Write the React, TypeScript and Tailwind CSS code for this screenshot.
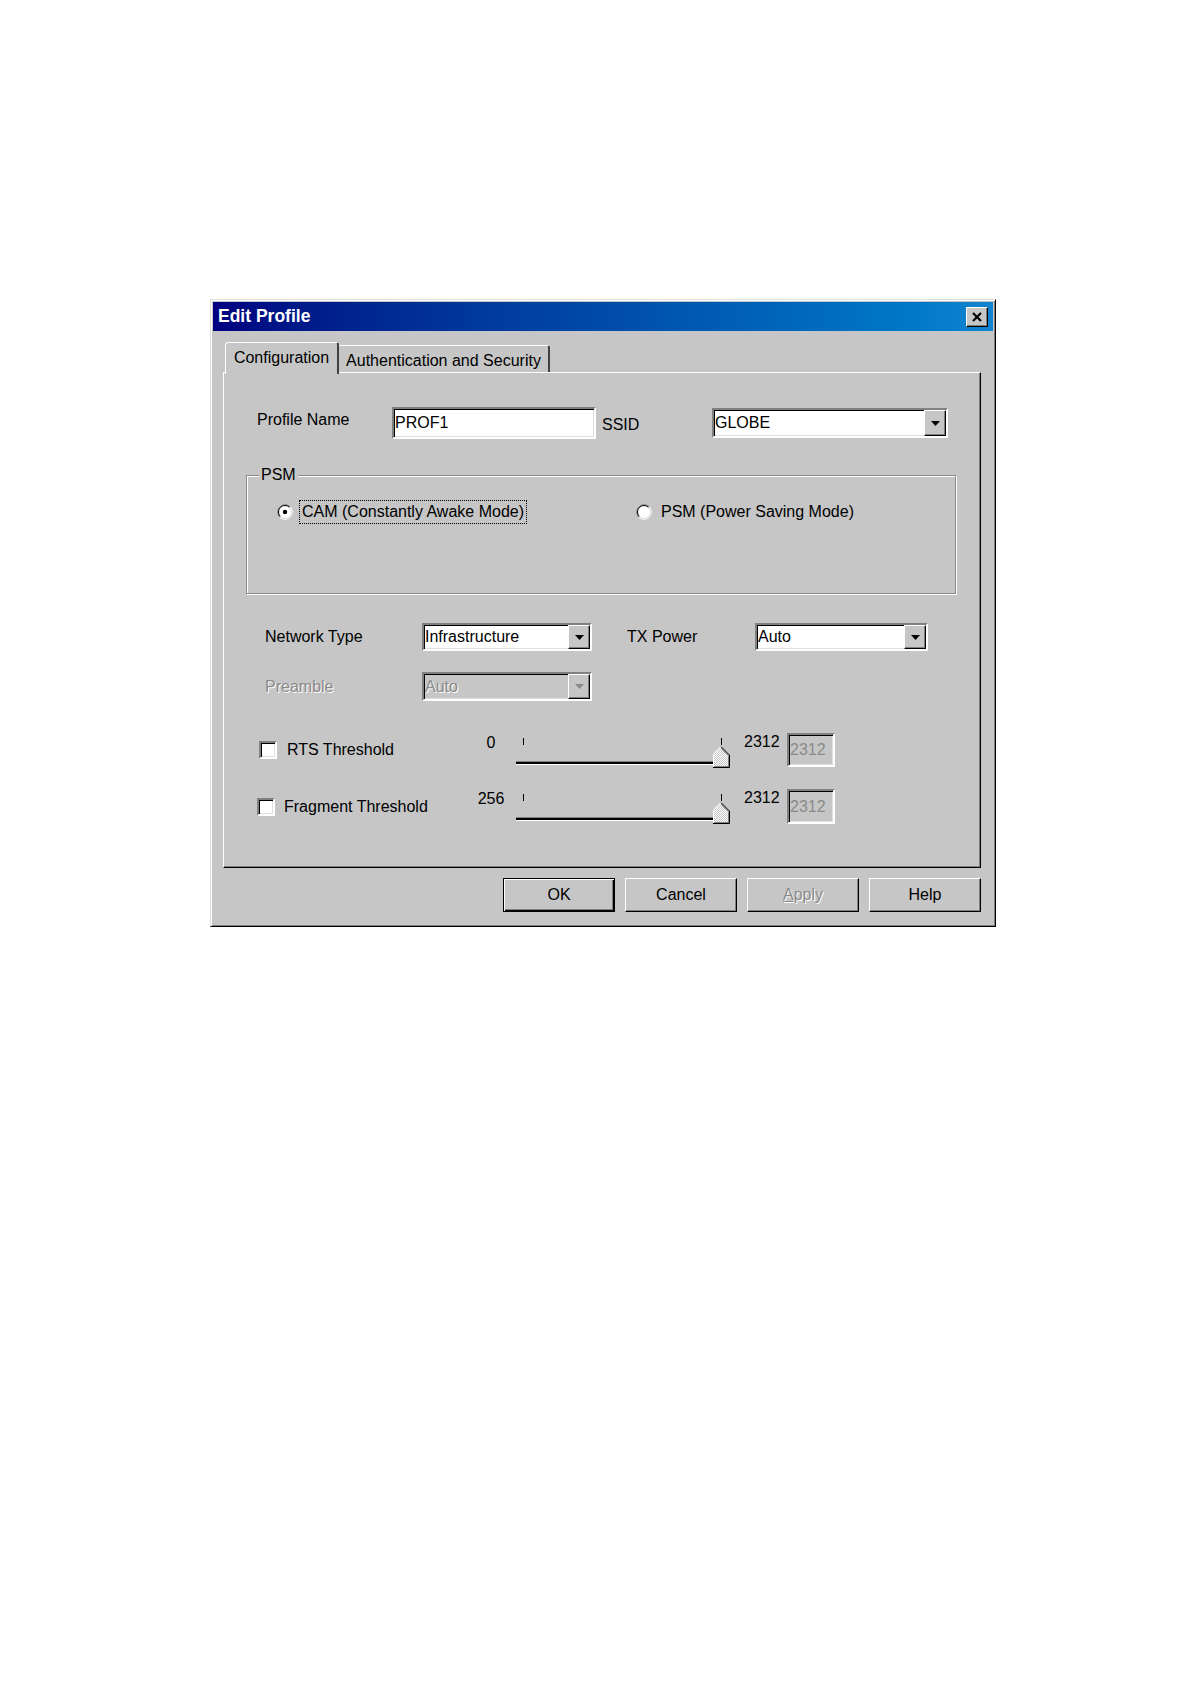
import React from "react";

// ── bevel helpers (Win9x look) ──
const SUNKEN =
  "border-2 border-t-[#808080] border-l-[#808080] border-r-white border-b-white shadow-[inset_1px_1px_0_#000,inset_-1px_-1px_0_#dfdfdf]";
const RAISED =
  "border border-t-white border-l-white border-r-black border-b-black shadow-[inset_-1px_-1px_0_#808080]";
const DISABLED_TEXT = "text-[#8a8a8a] [text-shadow:1px_1px_0_#fff]";

function Arrow({ disabled }: { disabled?: boolean }) {
  return (
    <div className={`w-[22px] h-full flex items-center justify-center bg-[#c6c6c6] ${RAISED}`}>
      <svg width="9" height="5" viewBox="0 0 9 5">
        <path d="M0 0h9L4.5 5z" fill={disabled ? "#8a8a8a" : "#000"} />
      </svg>
    </div>
  );
}

function Combo({
  value,
  width,
  height,
  disabled,
}: {
  value: string;
  width: string;
  height: string;
  disabled?: boolean;
}) {
  return (
    <div
      className={`${width} ${height} flex items-stretch ${SUNKEN} ${disabled ? "bg-[#c6c6c6]" : "bg-white"}`}
    >
      <span className={`flex-1 flex items-center pl-[1px] ${disabled ? DISABLED_TEXT : "text-black"}`}>
        {value}
      </span>
      <Arrow disabled={disabled} />
    </div>
  );
}

function Radio({ checked }: { checked?: boolean }) {
  return (
    <svg width="16" height="16" viewBox="0 0 16 16" className="shrink-0">
      <circle cx="8" cy="8" r="6.5" fill="#fff" />
      <path d="M2.7 13.3A7.5 7.5 0 0 1 13.3 2.7" stroke="#808080" strokeWidth="1" fill="none" />
      <path d="M13.3 2.7A7.5 7.5 0 0 1 2.7 13.3" stroke="#fff" strokeWidth="1" fill="none" />
      <path d="M3.4 12.6A6.5 6.5 0 0 1 12.6 3.4" stroke="#000" strokeWidth="1" fill="none" />
      <path d="M12.6 3.4A6.5 6.5 0 0 1 3.4 12.6" stroke="#dfdfdf" strokeWidth="1" fill="none" />
      {checked && <circle cx="8" cy="8" r="2.2" fill="#000" />}
    </svg>
  );
}

function Checkbox() {
  return <div className={`w-[18px] h-[18px] bg-white shrink-0 ${SUNKEN}`} />;
}

function Slider() {
  return (
    <svg width="216" height="35" viewBox="0 0 216 35" className="shrink-0">
      <defs>
        <pattern id="dither" width="2" height="2" patternUnits="userSpaceOnUse">
          <rect width="2" height="2" fill="#c6c6c6" />
          <rect width="1" height="1" fill="#fff" />
          <rect x="1" y="1" width="1" height="1" fill="#fff" />
        </pattern>
      </defs>
      {/* ticks */}
      <line x1="7.5" y1="5" x2="7.5" y2="12" stroke="#000" />
      <line x1="205.5" y1="5" x2="205.5" y2="12" stroke="#000" />
      {/* channel */}
      <rect x="0" y="28" width="205" height="1" fill="#808080" />
      <rect x="0" y="29" width="205" height="2" fill="#000" />
      <rect x="0" y="31" width="205" height="1" fill="#fff" />
      {/* thumb */}
      <polygon points="197,21 205,13 213,21 213,34 197,34" fill="url(#dither)" />
      <polyline points="197.5,34 197.5,21 205,13.5" fill="none" stroke="#fff" />
      <polyline points="205,13.5 213.5,22 213.5,34.5 197,34.5" fill="none" stroke="#000" />
      <polyline points="205,15 212.5,22.5 212.5,33.5 198,33.5" fill="none" stroke="#808080" />
    </svg>
  );
}

function ThresholdRow({
  label,
  min,
  pl,
  gap,
  labelW,
  rowClass,
}: {
  label: string;
  min: string;
  pl: string;
  gap: string;
  labelW: string;
  rowClass: string;
}) {
  return (
    <div className={`flex ${pl} ${rowClass}`}>
      <div className="flex items-center">
        <Checkbox />
      </div>
      <div className={`flex items-center ${gap} ${labelW}`}>{label}</div>
      <div className="w-[40px] text-center leading-[18px] mt-[1px]">{min}</div>
      <div className="ml-[5px]">
        <Slider />
      </div>
      <div className="w-[43px] ml-[12px] leading-[18px]">2312</div>
      <div
        className={`w-[48px] h-full bg-[#c6c6c6] flex items-center pl-[1px] text-[#8a8a8a] ${SUNKEN}`}
      >
        2312
      </div>
    </div>
  );
}

function Button({
  children,
  isDefault,
}: {
  children: React.ReactNode;
  isDefault?: boolean;
}) {
  const bevel = isDefault
    ? "border border-black shadow-[inset_1px_1px_0_#fff,inset_-1px_-1px_0_#000,inset_-2px_-2px_0_#808080]"
    : RAISED;
  return (
    <div className={`w-[112px] h-[34px] flex items-center justify-center bg-[#c6c6c6] ${bevel}`}>
      {children}
    </div>
  );
}

export default function App() {
  return (
    <div className="w-[1192px] h-[1684px] bg-white pt-[299px] pl-[210px] font-['Liberation_Sans',Arial,sans-serif] text-[16px] text-black">
      {/* 대화상자 */}
      <div className="w-[786px] h-[628px] bg-[#c6c6c6] p-[2px] border border-t-[#dfdfdf] border-l-[#dfdfdf] border-r-black border-b-black shadow-[inset_1px_1px_0_#fff,inset_-1px_-1px_0_#808080]">
        {/* title bar */}
        <div className="h-[29px] flex items-center justify-between pl-[5px] pr-[5px] bg-linear-to-r from-[#000080] to-[#1084d0]">
          <span className="text-white font-bold text-[17.5px] leading-none">Edit Profile</span>
          <div className={`w-[22px] h-[20px] flex items-center justify-center bg-[#c6c6c6] ${RAISED}`}>
            <svg width="12" height="10" viewBox="0 0 12 10">
              <path d="M2 1l8 8M10 1l-8 8" stroke="#000" strokeWidth="2.2" />
            </svg>
          </div>
        </div>

        {/* tabs */}
        <div className="mt-[11px] ml-[12px] h-[30px] flex items-end">
          <div className="relative z-10 -mb-[2px] h-[32px] w-[114px] bg-[#c6c6c6] rounded-tl-[3px] rounded-tr-[3px] border-l border-t border-l-white border-t-white border-r-2 border-r-[#404040] flex justify-center pt-[6px] leading-[18px]">
            Configuration
          </div>
          <div className="h-[27px] w-[211px] rounded-tr-[3px] border-t border-t-white border-r-2 border-r-[#404040] flex justify-center pt-[6px] leading-[18px]">
            Authentication and Security
          </div>
        </div>

        {/* tab panel */}
        <div className="ml-[10px] w-[758px] h-[496px] border border-t-white border-l-white border-r-black border-b-black shadow-[inset_-1px_-1px_0_#808080]">
          {/* profile name / ssid */}
          <div className="mt-[34px] pl-[33px] h-[32px] flex items-center">
            <span className="w-[135px] mb-[6px]">Profile Name</span>
            <div className={`w-[204px] h-[32px] bg-white flex items-center pl-[1px] ${SUNKEN}`}>PROF1</div>
            <span className="ml-[6px] w-[110px] mt-[4px]">SSID</span>
            <Combo value="GLOBE" width="w-[236px]" height="h-[30px]" />
          </div>

          {/* PSM group */}
          <div className="relative mt-[36px] ml-[22px] w-[710px] h-[119px] border border-[#8a8a8a] shadow-[inset_1px_1px_0_#fff,1px_1px_0_#fff]">
            <span className="absolute left-[12px] -top-[10px] px-[2px] bg-[#c6c6c6] leading-[18px]">PSM</span>
            <div className="flex pl-[30px] pt-[24px]">
              <div className="w-[359px] flex items-center">
                <Radio checked />
                <span className="ml-[6px] h-[24px] px-[2px] flex items-center border border-dotted border-black">
                  CAM (Constantly Awake Mode)
                </span>
              </div>
              <div className="flex items-center">
                <Radio />
                <span className="ml-[7px] h-[24px] px-[2px] flex items-center">PSM (Power Saving Mode)</span>
              </div>
            </div>
          </div>

          {/* network type / tx power */}
          <div className="mt-[29px] pl-[41px] h-[28px] flex items-center">
            <span className="w-[157px]">Network Type</span>
            <Combo value="Infrastructure" width="w-[170px]" height="h-[28px]" />
            <span className="ml-[35px] w-[128px]">TX Power</span>
            <Combo value="Auto" width="w-[173px]" height="h-[28px]" />
          </div>

          {/* preamble */}
          <div className="mt-[21px] pl-[41px] h-[29px] flex items-center">
            <span className={`w-[157px] ${DISABLED_TEXT}`}>Preamble</span>
            <Combo value="Auto" width="w-[170px]" height="h-[29px]" disabled />
          </div>

          {/* thresholds */}
          <ThresholdRow
            label="RTS Threshold"
            min="0"
            pl="pl-[35px]"
            gap="ml-[10px]"
            labelW="w-[184px]"
            rowClass="mt-[32px] h-[34px]"
          />
          <ThresholdRow
            label="Fragment Threshold"
            min="256"
            pl="pl-[33px]"
            gap="ml-[9px]"
            labelW="w-[187px]"
            rowClass="mt-[22px] h-[35px]"
          />
        </div>

        {/* buttons */}
        <div className="mt-[10px] ml-[10px] w-[758px] flex justify-end gap-[10px]">
          <Button isDefault>OK</Button>
          <Button>Cancel</Button>
          <Button>
            <span className={DISABLED_TEXT}>
              <span className="underline">A</span>pply
            </span>
          </Button>
          <Button>Help</Button>
        </div>
      </div>
    </div>
  );
}
